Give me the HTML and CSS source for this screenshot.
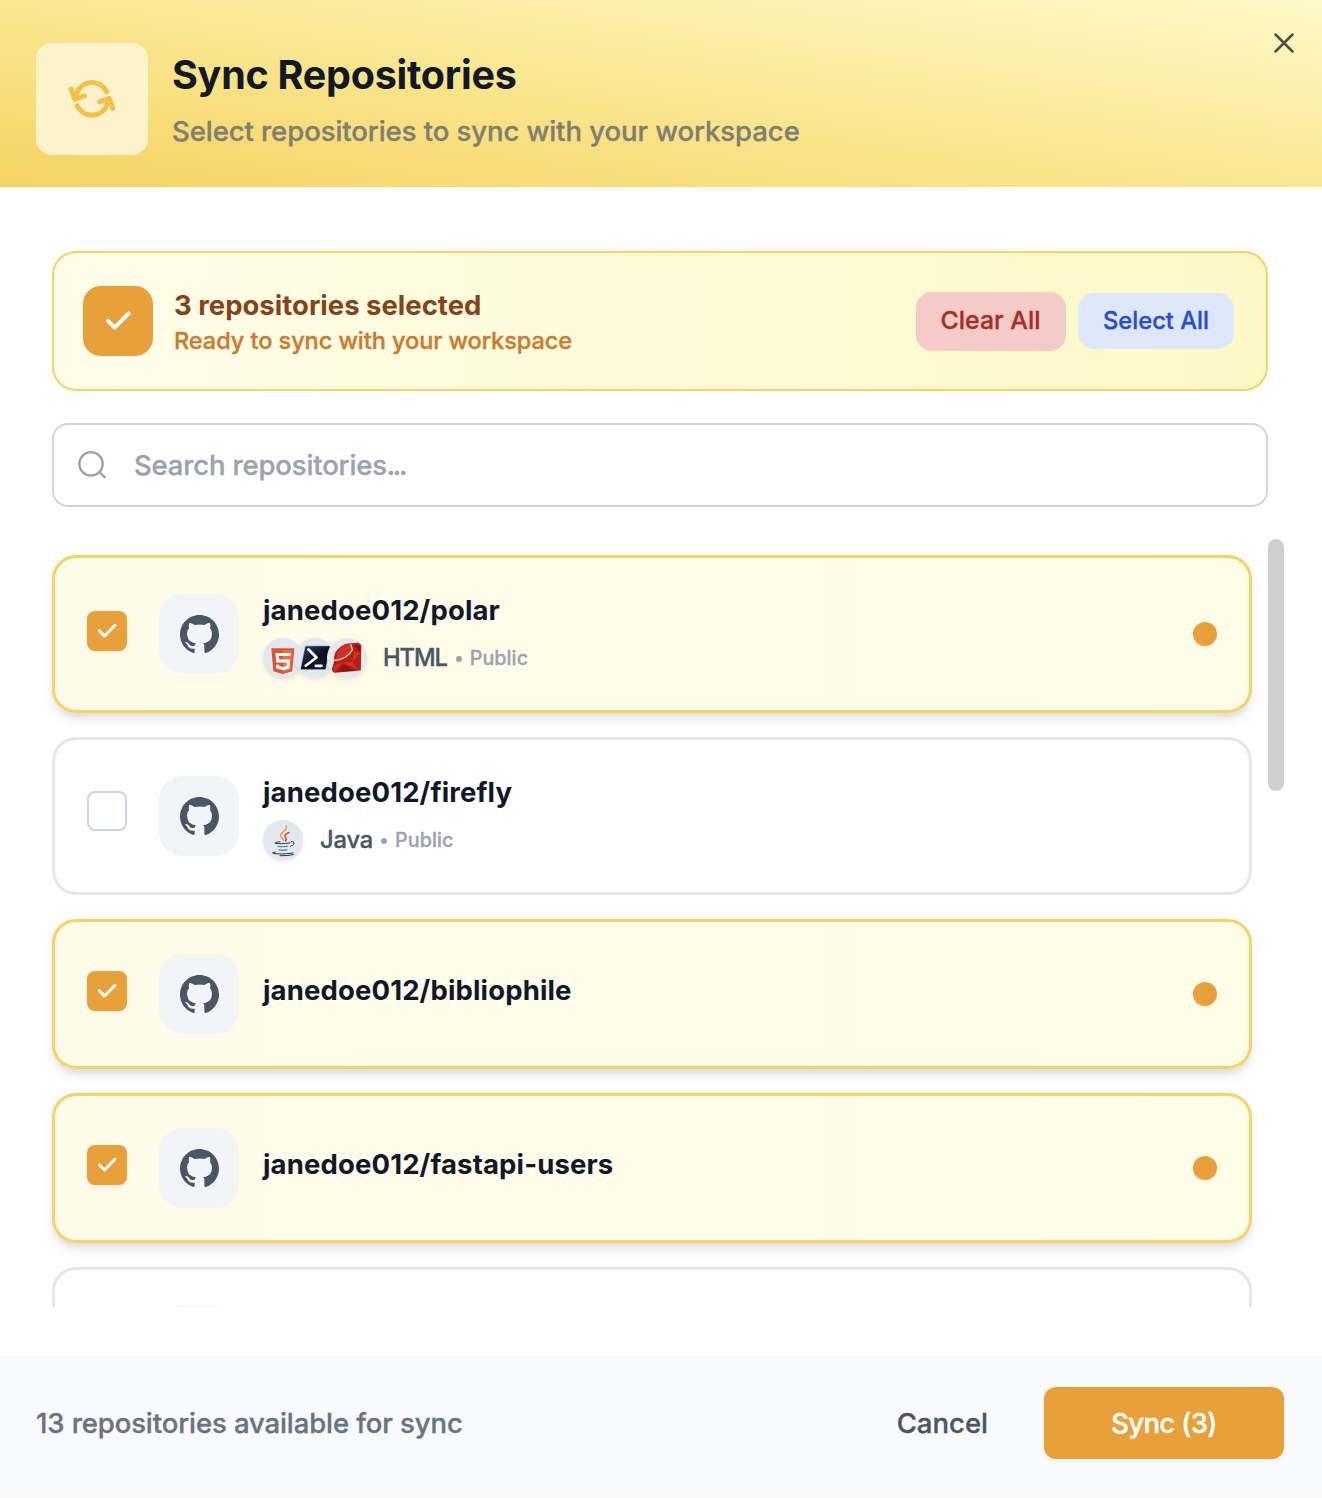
FILE: index.html
```html
<!DOCTYPE html>
<html lang="en">
<head>
<meta charset="utf-8">
<title>Sync Repositories</title>
<link rel="stylesheet" href="styles.css">
</head>
<body>
<svg class="sprite" aria-hidden="true">
  <symbol id="check" viewBox="0 0 24 24"><path d="M4.500 11.900 9.500 17 20 6.300" fill="none" stroke="#fff" stroke-width="2.900" stroke-linecap="round" stroke-linejoin="round"/></symbol>
  <symbol id="github" viewBox="0 0 16 16"><path fill="currentColor" d="M8 0C3.58 0 0 3.58 0 8c0 3.54 2.29 6.53 5.47 7.59.4.07.55-.17.55-.38 0-.19-.01-.82-.01-1.49-2.01.37-2.53-.49-2.69-.94-.09-.23-.48-.94-.82-1.13-.28-.15-.68-.52-.01-.53.63-.01 1.08.58 1.23.82.72 1.21 1.87.87 2.33.66.07-.52.28-.87.51-1.07-1.78-.2-3.64-.89-3.64-3.95 0-.87.31-1.59.82-2.15-.08-.2-.36-1.02.08-2.12 0 0 .67-.21 2.2.82.64-.18 1.32-.27 2-.27.68 0 1.36.09 2 .27 1.53-1.04 2.2-.82 2.2-.82.44 1.1.16 1.92.08 2.12.51.56.82 1.27.82 2.15 0 3.07-1.87 3.75-3.65 3.95.29.25.54.73.54 1.48 0 1.07-.01 1.93-.01 2.2 0 .21.15.46.55.38A8.013 8.013 0 0016 8c0-4.42-3.58-8-8-8z"/></symbol>
</svg>
<div class="dialog">
  <header class="header">
    <div class="header-icon">
      <svg width="56" height="56" viewBox="0 0 56 56" fill="none" stroke="#f3c149" stroke-width="5" stroke-linecap="round" stroke-linejoin="round">
        <path d="M12.700 22.300A16.300 16.300 0 0 1 42.800 21"/><path d="M7.200 18.200 10.800 28.200 20.500 24.800"/>
        <path d="M43.300 33.300A16.300 16.300 0 0 1 13.200 34.800"/><path d="M35.500 30.800 45.200 27.400 48.800 37.400"/>
      </svg>
    </div>
    <div class="header-text">
      <h1 class="title">Sync Repositories</h1>
      <p class="subtitle">Select repositories to sync with your workspace</p>
    </div>
    <svg class="close" width="20" height="20" viewBox="0 0 20 20"><path d="M1.500 1.500 18.500 18.500M18.500 1.500 1.500 18.500" stroke="#4f4f3f" stroke-width="2.500" stroke-linecap="round"/></svg>
  </header>
  <main class="body">
    <section class="banner">
      <div class="banner-icon"><svg width="32" height="32"><use href="#check"/></svg></div>
      <div class="banner-text">
        <p class="banner-title">3 repositories selected</p>
        <p class="banner-sub">Ready to sync with your workspace</p>
      </div>
      <div class="banner-actions">
        <button class="pill pill-clear">Clear All</button>
        <button class="pill pill-select">Select All</button>
      </div>
    </section>
    <div class="search">
      <svg width="32" height="32" viewBox="0 0 32 32" fill="none" stroke="#9ca3af" stroke-width="2.400" stroke-linecap="round"><circle cx="15" cy="14.800" r="11.700"/><path d="M23.600 23.400 28.600 28.200"/></svg>
      <span class="placeholder">Search repositories<span class="dots">...</span></span>
    </div>
    <div class="scroll">
      <ul class="list">
        <li class="card selected">
          <span class="box"><svg width="24" height="24"><use href="#check"/></svg></span>
          <span class="avatar"><svg width="39" height="39"><use href="#github"/></svg></span>
          <div class="info">
            <p class="name">janedoe012/polar</p>
            <div class="meta">
              <span class="langs">
                <span class="lang"><svg width="40" height="40" viewBox="0 0 40 40"><path fill="#dd5430" d="M8.300 10.200h23L29.200 33.300 19.800 36 10.400 33.300z"/><path fill="#e77142" d="M19.800 12h9.600l-1.800 20-7.800 2.200z"/><path fill="none" stroke="#fff" stroke-width="3" d="M27.500 16.600H14.100l.5 6.500H25.500l-.6 6.200-5.100 1.500-5.100-1.500-.2-2.600"/></svg></span>
                <span class="lang"><svg width="40" height="40" viewBox="0 0 40 40"><defs><linearGradient id="ps" x1="0" y1="0" x2="1" y2="1"><stop offset="0" stop-color="#2d4566"/><stop offset=".55" stop-color="#08121f"/><stop offset="1" stop-color="#142338"/></linearGradient></defs><path fill="url(#ps)" stroke="#dfe5ec" stroke-width=".6" d="M11.500 7.800h22.700q1.200 0 1 1.200L31 30.500q-.3 1.200-1.500 1.200H6.500q-1.300 0-1-1.200L9.900 9q.3-1.200 1.600-1.200z"/><path fill="none" stroke="#fff" stroke-width="2.700" stroke-linecap="round" stroke-linejoin="round" d="M13.500 11.500 21.500 19.500 10.700 27.800M20.800 27.800h5.700"/></svg></span>
                <span class="lang"><svg width="40" height="40" viewBox="0 0 40 40"><path fill="#b32016" d="M23.500 5.300 31 4.800Q34.600 6 34.300 9L33.800 32.500 8 34.800Q4.800 34 5 30.500L7.500 22Q5.500 15 13.500 8.700q5-3.500 10-3.400z"/><path fill="#cf3323" d="M14 9.300q5-3.700 10-3l1.500 5.400q-2.700 8-15 11.300Q7 16.500 14 9.300z"/><path fill="#d0341f" d="M27 13.500 33 15l-7.500 9zM16 24.500 25.500 24l6 8zM6.500 28 15 24.500 8 33.500z"/><path fill="#8e130c" d="M26.500 7 33.500 7.500 33 14zM17 26.500 28 32.500 10 34z"/><path fill="none" stroke="#f3d0ca" stroke-width="1.300" d="M7.800 22.500Q20.500 21 25.500 11.800L23.700 6.200"/></svg></span>
              </span>
              <span class="language caps">HTML</span><i class="bullet"></i><span class="visibility">Public</span>
            </div>
          </div>
          <i class="dot"></i>
        </li>
        <li class="card">
          <span class="box"></span>
          <span class="avatar"><svg width="39" height="39"><use href="#github"/></svg></span>
          <div class="info">
            <p class="name">janedoe012/firefly</p>
            <div class="meta">
              <span class="langs">
                <span class="lang"><svg width="40" height="40" viewBox="0 0 40 40" fill="none" stroke-linecap="round"><path stroke="#eda043" stroke-width="1.500" d="M23.200 6Q24.300 8.700 20.200 11.800 16 15 18.500 17.500L20.500 20.200"/><path stroke="#cf4a33" stroke-width="1.500" d="M26 12.500Q20.500 14.600 22.300 17.300 24 19 22.500 21"/><g stroke="#30363e" stroke-width="1"><path d="M17 21.800Q10 22.700 12.500 23.300 17 24.300 27 22.900M28.500 21.600Q32.200 21.500 30.800 24.200 29.800 26 27.500 26.200M12.500 32Q7.800 32.700 10.500 33.500 17 34.500 29.500 33.100L30 32.500M17 35.700Q26 36 30.500 34.500"/></g><g stroke="#4a7fa8" stroke-width="1.100"><path d="M15 26.300Q19 27.300 24.500 26.300M16 29.900Q20 30.800 24 29.900"/></g></svg></span>
              </span>
              <span class="language">Java</span><i class="bullet"></i><span class="visibility">Public</span>
            </div>
          </div>
        </li>
        <li class="card selected">
          <span class="box"><svg width="24" height="24"><use href="#check"/></svg></span>
          <span class="avatar"><svg width="39" height="39"><use href="#github"/></svg></span>
          <div class="info"><p class="name">janedoe012/bibliophile</p></div>
          <i class="dot"></i>
        </li>
        <li class="card selected">
          <span class="box"><svg width="24" height="24"><use href="#check"/></svg></span>
          <span class="avatar"><svg width="39" height="39"><use href="#github"/></svg></span>
          <div class="info"><p class="name">janedoe012/fastapi-users</p></div>
          <i class="dot"></i>
        </li>
        <li class="card cut">
          <span class="box"></span>
          <span class="avatar"></span>
        </li>
      </ul>
      <div class="thumb"></div>
    </div>
  </main>
  <footer class="footer">
    <p class="count">13 repositories available for sync</p>
    <button class="cancel">Cancel</button>
    <button class="sync">Sync (3)</button>
  </footer>
</div>
</body>
</html>
```
FILE: styles.css
```css
* { box-sizing: border-box; margin: 0; padding: 0; }
body { background: #fff; font-family: Inter, "Liberation Sans", sans-serif; font-weight: 500; -webkit-text-stroke: .35px; }
button { border: 0; background: none; font: inherit; white-space: nowrap; }
svg { display: block; flex: none; }
ul { list-style: none; }
.sprite { width: 0; height: 0; position: absolute; }
.dialog { width: 1322px; height: 1498px; display: flex; flex-direction: column; overflow: hidden; }

.header { height: 187px; display: flex; align-items: flex-start; padding: 33px 28px 0 36px; background: linear-gradient(to top right, #f6d362, #fae792 50%, #fef9c9); }
.header-icon { width: 112px; height: 112px; margin-top: 10px; border-radius: 16px; background: #fcf3cd; display: flex; align-items: center; justify-content: center; }
.header-text { margin: 18px 0 0 24px; flex: 1; }
.title { font-size: 39.5px; line-height: 48px; font-weight: 700; letter-spacing: -.25px; color: #111827; -webkit-text-stroke: 0; }
.subtitle { margin-top: 12px; font-size: 27.5px; line-height: 40px; letter-spacing: -.07px; color: #808070; }

.body { height: 1168px; padding: 64px 38px 48px 52px; display: flex; flex-direction: column; }
.banner { height: 140px; width: 1216px; flex: none; border: 2px solid #f6d365; border-radius: 24px; background: linear-gradient(to right, #fffdea, #fdf8c6); display: flex; align-items: center; padding: 0 32px 0 29px; }
.banner-icon { width: 70px; height: 70px; border-radius: 18px; background: #e8a13a; display: flex; align-items: center; justify-content: center; }
.banner-text { margin-left: 21px; flex: 1; padding-top: 2px; }
.banner-title { font-size: 27.5px; line-height: 38px; font-weight: 700; color: #854319; -webkit-text-stroke: 0; }
.banner-sub { font-size: 23.5px; line-height: 34px; letter-spacing: -.05px; color: #cb7b2d; }
.banner-actions { display: flex; align-items: center; gap: 12.5px; }
.pill { font-size: 23.7px; border-radius: 16px; }
.pill-clear { width: 150px; height: 59px; font-size: 24.9px; background: #f5cbca; color: #aa2c27; padding-bottom: 2px; }
.pill-select { width: 156px; height: 56px; background: #dee8fb; color: #2a4cd3; padding-bottom: 1px; }

.search { margin-top: 32px; width: 1216px; height: 84px; flex: none; border: 2px solid #d1d5db; border-radius: 16px; display: flex; align-items: center; padding-left: 22px; gap: 26px; }
.placeholder { font-size: 27.5px; letter-spacing: -.16px; color: #9ca3af; }
.dots { letter-spacing: -2.3px; }

.scroll { margin: 32px 0 0 -24px; padding-left: 24px; height: 768px; display: flex; gap: 16px; overflow: hidden; }
.list { width: 1200px; padding-top: 16px; display: flex; flex-direction: column; gap: 24px; flex: none; }
.thumb { width: 16px; height: 252px; border-radius: 8px; background: #cfcfcf; }
.card { flex: none; border: 3px solid #e5e7eb; border-radius: 24px; padding: 32px; display: flex; align-items: center; background: #fff; }
.card.selected { border-color: #f6d365; background: linear-gradient(to right, #fffbeb, #fefde8); box-shadow: 0 8px 12px -2px rgba(0, 0, 0, .1), 0 4px 8px -4px rgba(0, 0, 0, .1); }
.card.cut { height: 158px; }
.box { width: 40px; height: 40px; flex: none; border: 2px solid #cbd5e1; border-radius: 8px; margin-bottom: 10px; }
.selected .box { border: 0; background: #e8a13a; margin-bottom: 6px; display: flex; align-items: center; justify-content: center; box-shadow: 0 2px 4px rgba(0, 0, 0, .06); }
.avatar { width: 80px; height: 80px; flex: none; margin-left: 32px; border-radius: 24px; background: #f3f4f6; color: #4b5563; display: flex; align-items: center; justify-content: center; }
.info { margin-left: 24px; flex: 1; }
.name { font-size: 27.5px; line-height: 40px; margin-bottom: 8px; font-weight: 700; letter-spacing: .14px; color: #111827; -webkit-text-stroke: 0; }
.meta { display: flex; align-items: center; height: 40px; }
.langs { display: flex; margin-right: 17px; }
.lang { width: 40px; height: 40px; border-radius: 50%; background: #e2e8f0; border: 2px solid #e5e7eb; box-shadow: 0 2px 4px rgba(0, 0, 0, .08); }
.lang svg { margin: -2px; }
.lang + .lang { margin-left: -8px; }
.language { font-size: 23.7px; letter-spacing: -.15px; padding-bottom: 2px; color: #4b5563; }
.language.caps { margin-left: -1px; letter-spacing: -1.1px; }
.bullet { width: 6px; height: 6px; border-radius: 50%; background: #9ca3af; margin: 2px 8px 0 8px; }
.language.caps + .bullet { margin-left: 9px; }
.visibility { font-size: 19.7px; letter-spacing: .07px; color: #9ca3af; }
.dot { width: 24px; height: 24px; border-radius: 50%; background: #e8a13a; box-shadow: 0 2px 3px rgba(0, 0, 0, .06); }

.footer { height: 142px; background: #f9fafb; padding: 32px 38px 0 36px; display: flex; align-items: flex-start; line-height: 72px; font-size: 27.5px; }
.count { flex: 1; letter-spacing: -.1px; color: #6b7280; }
.cancel { color: #4b5563; margin-right: 56px; line-height: 72px; }
.sync { width: 240px; height: 72px; line-height: 72px; border-radius: 12px; letter-spacing: -.65px; background: #e8a13a; color: #fff; box-shadow: 0 2px 4px rgba(0, 0, 0, .06); }
```
